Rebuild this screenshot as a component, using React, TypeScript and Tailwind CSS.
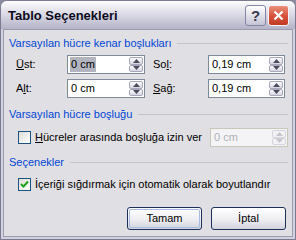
import React from 'react';

const font = { fontFamily: '"Liberation Sans", Arial, sans-serif' };

const Spinner: React.FC<{ disabled?: boolean }> = ({ disabled }) => {
  const arrow = disabled ? '#c4c4cc' : '#4a4a5c';
  const btn =
    'flex-1 flex items-center justify-center rounded-[2px] border ' +
    (disabled
      ? 'border-[#d4d4dc] bg-[#f2f2f4]'
      : 'border-[#a8a8bc] bg-gradient-to-b from-[#fbfbfd] to-[#d6d6e2]');
  return (
    <div className="flex flex-col w-[15px] h-full py-[1px] pr-[1px] gap-0">
      <div className={btn}>
        <svg width="7" height="4" viewBox="0 0 7 4">
          <path d="M0 4 L3.5 0 L7 4 Z" fill={arrow} />
        </svg>
      </div>
      <div className={btn}>
        <svg width="7" height="4" viewBox="0 0 7 4">
          <path d="M0 0 L3.5 4 L7 0 Z" fill={arrow} />
        </svg>
      </div>
    </div>
  );
};

const SpinBox: React.FC<{ value: string; selected?: boolean; disabled?: boolean; width?: string }> = ({
  value,
  selected,
  disabled,
  width = 'w-[78px]',
}) => (
  <div
    className={
      'flex items-stretch h-[19px] border ' +
      width +
      (disabled ? ' border-[#c9c7ba] bg-[#f4f4f6]' : ' border-[#7f8a98] bg-white')
    }
  >
    <div className="flex-1 flex items-center pl-[2px] text-[11px] leading-none">
      <span
        className={
          'px-[1px] py-[2px] ' +
          (selected ? 'bg-[#b2b4bf] text-black' : disabled ? 'text-[#b0b0b8]' : 'text-black')
        }
      >
        {value}
      </span>
    </div>
    <Spinner disabled={disabled} />
  </div>
);

const Heading: React.FC<{ children: React.ReactNode }> = ({ children }) => (
  <div className="flex items-center gap-[6px] h-[13px]">
    <span className="text-[11px] leading-[13px] text-[#0046d5] whitespace-nowrap">{children}</span>
    <div className="flex-1 h-px bg-[#c4c4cc]" />
  </div>
);

const CheckBox: React.FC<{ checked?: boolean }> = ({ checked }) => (
  <div className="w-[13px] h-[13px] border border-[#1c5180] bg-gradient-to-br from-[#dcdcd7] to-white flex items-center justify-center shrink-0">
    {checked && (
      <svg width="9" height="9" viewBox="0 0 9 9">
        <path d="M1 4 L3.5 6.5 L8 1.5" stroke="#21a121" strokeWidth="2" fill="none" />
      </svg>
    )}
  </div>
);

const Button: React.FC<{ children: React.ReactNode; primary?: boolean }> = ({ children, primary }) => (
  <div className="w-[75px] h-[23px] rounded-[3px] border border-[#1e2f5a] bg-gradient-to-b from-white via-[#f0f0f4] to-[#d4d4de] p-px">
    <div
      className={
        'w-full h-full rounded-[2px] flex items-center justify-center text-[11px] text-black ' +
        (primary ? 'border border-[#a8bce6]' : '')
      }
    >
      {children}
    </div>
  </div>
);

const App: React.FC = () => {
  return (
    <div className="w-[296px] h-[240px] bg-[#8c8ca0] p-0" style={font}>
      <div className="w-full h-full rounded-t-[7px] border border-[#7a7a90] bg-[#d2d2de] flex flex-col">
        {/* title bar */}
        <div className="h-[28px] rounded-t-[6px] bg-gradient-to-b from-[#fdfdfe] via-[#d9d8e4] to-[#b4b3c8] flex items-center pl-[7px] pr-[6px]">
          <span className="text-[13px] font-bold text-[#0c0c1c] flex-1 pt-[1px]" style={font}>
            Tablo Seçenekleri
          </span>
          <div className="flex gap-[2px]">
            <div className="w-[21px] h-[21px] rounded-[3px] border border-[#8486a4] bg-gradient-to-b from-white to-[#c4c4d6] flex items-center justify-center">
              <span className="text-[15px] font-bold text-[#3a3a4c] leading-none">?</span>
            </div>
            <div className="w-[21px] h-[21px] rounded-[3px] border border-[#f4f4f8] bg-gradient-to-b from-[#e8907c] via-[#d7553c] to-[#c13a22] flex items-center justify-center">
              <svg width="11" height="11" viewBox="0 0 11 11">
                <path d="M1.5 1.5 L9.5 9.5 M9.5 1.5 L1.5 9.5" stroke="white" strokeWidth="2.2" />
              </svg>
            </div>
          </div>
        </div>
        {/* client */}
        <div className="flex-1 mx-[2px] mb-[2px] border border-[#9c9cb0] bg-[#e0dfe3] flex flex-col pl-[5px] pr-[4px] pt-[7px] text-[11px] text-black">
          <Heading>Varsayılan hücre kenar boşlukları</Heading>
          <div className="flex flex-col gap-[5px] mt-[5px] pl-[7px]">
            <div className="flex items-center">
              <span className="w-[51px]">
                <u>Ü</u>st:
              </span>
              <SpinBox value="0 cm" selected />
              <span className="w-[55px] ml-[8px]">
                So<u>l</u>:
              </span>
              <SpinBox value="0,19 cm" width="w-[77px]" />
            </div>
            <div className="flex items-center">
              <span className="w-[51px]">
                A<u>l</u>t:
              </span>
              <SpinBox value="0 cm" />
              <span className="w-[55px] ml-[8px]">
                <u>S</u>ağ:
              </span>
              <SpinBox value="0,19 cm" width="w-[77px]" />
            </div>
          </div>
          <div className="mt-[10px]">
            <Heading>Varsayılan hücre boşluğu</Heading>
          </div>
          <div className="flex items-center mt-[7px] pl-[9px]">
            <CheckBox />
            <span className="ml-[4px] flex-1">
              <u>H</u>ücreler arasında boşluğa izin ver
            </span>
            <SpinBox value="0 cm" disabled />
          </div>
          <div className="mt-[9px]">
            <Heading>Seçenekler</Heading>
          </div>
          <div className="flex items-center h-[19px] mt-[6px] pl-[9px]">
            <CheckBox checked />
            <span className="ml-[4px]">
              İçeriği sı<u>ğ</u>dırmak için otomatik olarak boyutlandır
            </span>
          </div>
          <div className="flex justify-end gap-[9px] mt-[13px] pr-[2px]">
            <Button primary>Tamam</Button>
            <Button>İptal</Button>
          </div>
        </div>
      </div>
    </div>
  );
};

export default App;
